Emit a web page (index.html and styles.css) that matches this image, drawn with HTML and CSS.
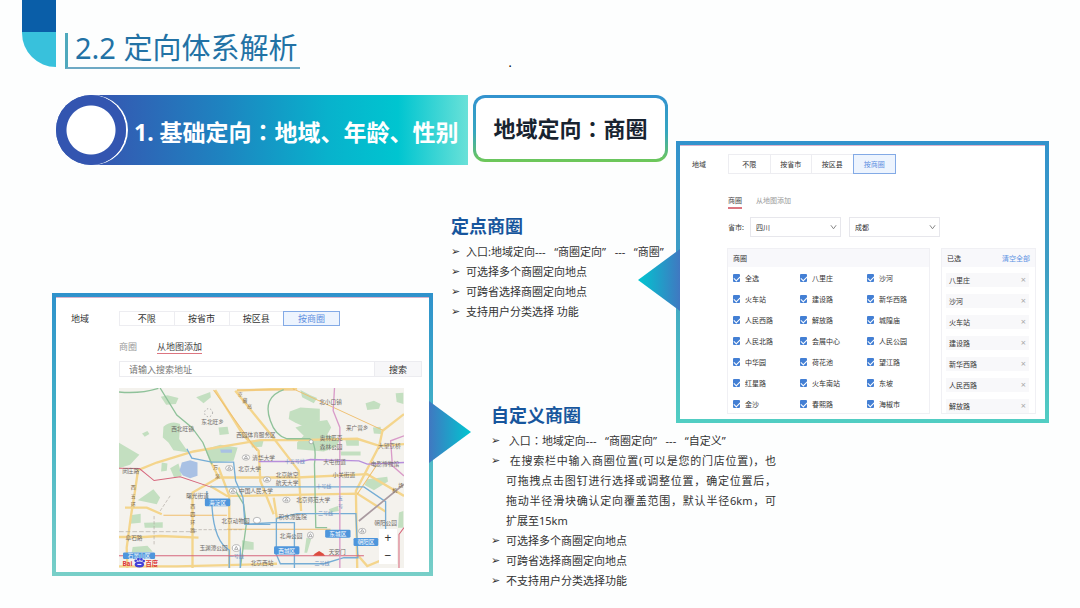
FILE: index.html
```html
<!DOCTYPE html>
<html lang="zh-CN">
<head>
<meta charset="utf-8">
<title>2.2 定向体系解析</title>
<link rel="stylesheet" href="styles.css">
</head>
<body>
<header class="header">
  <div class="ribbon"></div>
  <h1 class="title">2.2 定向体系解析</h1>
  <span class="dot">.</span>
</header>
<main class="stage">
  <div class="banner">
    <h2 class="banner-bar"><span class="ring"></span><span>1. 基础定向<span class="colon" lang="zh-TW">：</span>地域、年龄、性别</span></h2>
    <h2 class="banner-box">地域定向<span class="colon" lang="zh-TW">：</span>商圈</h2>
  </div>

  <section class="notes notes-fixed">
    <h3>定点商圈</h3>
    <ul>
      <li>入口:地域定向---&nbsp;&nbsp; “商圈定向”&nbsp;&nbsp; ---&nbsp;&nbsp; “商圈”</li>
      <li>可选择多个商圈定向地点</li>
      <li>可跨省选择商圈定向地点</li>
      <li>支持用户分类选择 功能</li>
    </ul>
  </section>

  <section class="notes notes-custom">
    <h3>自定义商圈</h3>
    <ul>
      <li>&nbsp;入口<span class="colon" lang="zh-TW">：</span>地域定向---&nbsp;&nbsp; “商圈定向”&nbsp;&nbsp; ---&nbsp;&nbsp; “自定义”</li>
      <li><span class="full">&nbsp;在搜索栏中输入商圈位置(可以是您的门店位置)，也</span><span class="full">可拖拽点击图钉进行选择或调整位置，确定位置后，</span><span class="full">拖动半径滑块确认定向覆盖范围，默认半径6km，可</span>扩展至15km</li>
      <li>可选择多个商圈定向地点</li>
      <li>可跨省选择商圈定向地点</li>
      <li>不支持用户分类选择功能</li>
    </ul>
  </section>

  <section class="panel panel-map">
    <div class="row">
      <span class="label">地域</span>
      <div class="segments">
        <button type="button">不限</button><button type="button">按省市</button><button type="button">按区县</button><button type="button" class="on">按商圈</button>
      </div>
    </div>
    <div class="body">
      <div class="tabs"><button type="button">商圈</button><button type="button" class="on">从地图添加</button></div>
      <form class="search">
        <input type="text" placeholder="请输入搜索地址" aria-label="搜索地址">
        <button type="button">搜索</button>
      </form>
      <div class="map">
        <svg viewBox="27 22 853 540" role="img" aria-label="北京地图">
          <rect x="27" y="22" width="853" height="540" fill="#f4f2ed"/>
          <g fill="#c3dfc0">
            <path d="M27 186L88 222L60 252L27 262Z"/>
            <path d="M160 138Q185 118 210 130L207 175L235 215L190 208L175 185L158 170Z"/>
            <path d="M258 50L300 34L302 50L280 68Z"/><path d="M325 140L352 138L356 160L328 163Z"/>
            <path d="M96 158L112 151L118 160L104 168Z"/><path d="M152 48L172 44L205 52L197 70L168 72Z"/>
            <path d="M285 205L330 192L382 200L370 240L300 246Z"/>
            <path d="M155 245L172 248L170 270L153 272Z"/><path d="M180 262L205 248L215 285L192 290Z"/>
            <path d="M83 358L130 325L150 350L140 370Z"/><path d="M66 402L92 398L92 425L60 428Z"/>
            <path d="M102 425L158 424L158 440L104 440Z"/><path d="M68 498L112 494L128 512L65 514Z"/>
            <path d="M395 478L430 484L430 506L395 505Z"/><path d="M420 180L460 178L455 198L425 200Z"/>
            <path d="M538 92L570 80L628 84L628 120L590 142L555 126L535 115Z"/>
            <path d="M555 140L606 124L650 118L662 140L650 162L690 176L676 198L640 212L560 205L560 185L580 165Z"/>
            <path d="M765 68L790 60L810 70L805 84L770 88Z"/><path d="M855 38L878 36L878 70L858 64Z"/>
            <path d="M770 295L830 288L832 302L790 328L762 312Z"/><path d="M705 178H745V195H708Z"/><path d="M690 212H750V224H692Z"/>
            <path d="M570 28L600 44L620 52L610 68L575 50Z"/><path d="M865 395L878 390V440L862 440Z"/><path d="M787 140L810 138L812 160L790 158Z"/>
            <path d="M588 470L602 475L590 515L582 515Z"/><path d="M655 385L682 375L685 390L660 395Z"/>
          </g>
          <g fill="#a9c1e4"><path d="M215 245L240 238L262 245L262 285L240 292L218 284L208 270Z"/><path d="M330 206H365V216H332Z"/></g>
          <g fill="none" stroke="#f4d58c" stroke-width="7">
            <path d="M52 562L50 500L62 410L75 330L84 268L140 245L250 212L330 198L450 178L560 178L740 174L806 195L880 190"/>
            <path d="M247 562V335L325 290L300 240"/><path d="M27 468H100L150 465L265 470"/>
            <path d="M325 290H560L770 280L880 345"/><path d="M300 315L350 345H400L740 338L825 392"/>
            <path d="M357 562V345L325 260"/><path d="M375 30L480 160L565 270L572 390"/>
            <path d="M315 28L400 165L445 210L450 300L490 400"/><path d="M380 30L560 22"/>
            <path d="M816 148L806 195L736 330L740 562"/>
            <path d="M816 150L880 100"/><path d="M45 380H110L155 400"/>
            <path d="M27 556H200L500 548M490 350L500 415"/><path d="M740 520L770 555L830 530"/>
          </g>
          <g fill="none" stroke="#efbf6e" stroke-width="3"><path d="M547 24L816 148M310 28L440 210M380 28H560M740 340L800 250"/><path d="M160 403H350M350 445H660"/></g>
          <g fill="none" stroke="#b0aaa2" stroke-width="2"><path d="M27 452H260" stroke-dasharray="14 6"/><path d="M250 446H400M150 390L180 345M132 405V490" stroke-dasharray="10 5"/></g>
          <g fill="none" stroke="#8fc29a" stroke-width="4">
            <path d="M27 34Q90 40 145 23"/><path d="M150 22L200 103L245 140L278 185L305 250"/><path d="M520 27Q455 50 480 120Q495 165 530 174H598Q620 190 612 250L616 440H650"/>
            <path d="M370 320L400 370L408 430L390 562"/>
          </g>
          <g fill="none" stroke="#75add5" stroke-width="4">
            <path d="M230 204L245 232L305 244H370L376 300L398 350L404 430L480 430"/><path d="M300 318H760L825 362V445"/>
            <path d="M290 330V350L305 370Q310 480 357 507V562"/><path d="M498 412L560 398H736L742 530H700L640 548H510L498 520V412M498 425H552V562M404 430L500 424"/>
            <path d="M390 500V562"/>
          </g>
          <g fill="none" stroke="#d6667c" stroke-width="3"><path d="M27 262L88 263L132 299L210 288L300 318"/><path d="M27 524H760"/><path d="M865 562V460L880 440"/></g>
          <g fill="none" stroke="#d99bc9" stroke-width="4"><path d="M672 22L668 90L688 140V562"/><path d="M845 250L840 180L880 165M840 250L880 285"/></g>
          <path d="M445 242H570L600 236L745 240L770 250L880 245" fill="none" stroke="#b78edc" stroke-width="4"/>
          <path d="M745 420L880 310" stroke="#a99aa0" stroke-width="5"/>
          <g fill="#fff" stroke="#999" stroke-width="2"><ellipse cx="407" cy="230" rx="11" ry="8"/><ellipse cx="357" cy="262" rx="11" ry="8"/><ellipse cx="470" cy="296" rx="11" ry="8"/><ellipse cx="368" cy="330" rx="11" ry="8"/><ellipse cx="528" cy="357" rx="11" ry="8"/><ellipse cx="755" cy="450" rx="11" ry="8"/><ellipse cx="600" cy="463" rx="9" ry="10"/><ellipse cx="378" cy="501" rx="12" ry="10"/><ellipse cx="440" cy="418" rx="11" ry="9"/><circle cx="602" cy="183" r="6"/></g>
          <g fill="none" stroke="#888" stroke-width="2"><path d="M402 233l5-8 5 8zM352 265l5-8 5 8zM465 299l5-8 5 8zM363 333l5-8 5 8zM523 360l5-8 5 8zM750 453l5-8 5 8zM595 467l5-9 5 9zM373 505l5-9 5 9z"/><circle cx="295" cy="96" r="12" stroke-dasharray="4 6"/></g>
          <g class="place">
            <text x="307" y="129">东北旺乡</text><text x="217" y="152">西北旺镇</text><text x="437" y="168">西园体育服务区</text>
            <text x="460" y="237">清华大学</text><text x="418" y="269">北京大学</text><text x="437" y="337">中国人民大学</text>
            <text x="660" y="69">北小口镇</text><text x="740" y="149">来广营乡</text><text x="662" y="177">奥林匹克</text><text x="662" y="204">森林公园</text>
            <text x="836" y="202">大望京桥</text><text x="672" y="250">大屯街道</text><text x="823" y="255">电影博物馆</text><text x="700" y="287">小关街道</text>
            <text x="530" y="287">北京航空</text><text x="530" y="312">航天大学</text><text x="608" y="364">北京师范大学</text><text x="262" y="350">曙光街道</text>
            <text x="376" y="425">北京动物园</text><text x="310" y="508">玉渊潭公园</text><text x="72" y="477">阜石路</text><text x="542" y="470">北海公园</text>
            <text x="547" y="414">积水潭医院</text><text x="680" y="518">天安门</text><text x="825" y="432">朝阳公园</text><text x="62" y="276">闵庄路</text><text x="455" y="553">北京西站</text>
          </g>
          <g class="road">
            <text x="70" y="325">西</text><text x="70" y="350">五</text><text x="70" y="375">环</text>
            <text x="248" y="380">西</text><text x="248" y="404">四</text><text x="248" y="428">环</text><text x="248" y="452">路</text>
            <text x="316" y="264">万</text><text x="322" y="290">泉</text>
            <text x="390" y="46">京</text><text x="404" y="64">藏</text><text x="418" y="82">高</text>
            <text x="852" y="334">机</text><text x="870" y="318">场</text>
          </g>
          <g class="line"><text x="553" y="246">十五号线</text><text x="640" y="322">十号线</text><text x="645" y="403">二号线</text><text x="635" y="553">二号线</text><text x="378" y="532">一号线</text><text x="690" y="357">五</text><text x="690" y="382">号</text></g>
          <g fill="#4e96dc"><rect x="284" y="353" width="76" height="23" rx="4"/><rect x="644" y="446" width="76" height="24" rx="4"/><rect x="729" y="471" width="74" height="24" rx="4"/><rect x="491" y="496" width="76" height="24" rx="4"/><rect x="39" y="514" width="96" height="20" rx="4"/></g>
          <g class="district"><text x="322" y="371">海淀区</text><text x="682" y="465">东城区</text><text x="766" y="490">朝阳区</text><text x="529" y="515">西城区</text><text x="87" y="530">石景山区</text></g>
          <path d="M607 524L614 517L626 510L638 517L644 524Z" fill="#dc4c3f"/>
          <g class="brand"><text x="52" y="555">Bai</text><text x="125" y="555">百度</text></g>
          <g fill="#413fd7"><ellipse cx="88" cy="550" rx="14" ry="9"/><circle cx="77" cy="539" r="4"/><circle cx="85" cy="535" r="4"/><circle cx="94" cy="535" r="4"/><circle cx="101" cy="540" r="4"/></g>
          <path d="M82 550H94" stroke="#fff" stroke-width="3"/>
        </svg>
        <div class="zoomer"><button type="button" aria-label="放大">+</button><button type="button" aria-label="缩小">−</button></div>
      </div>
    </div>
  </section>

  <section class="panel panel-list">
    <div class="row">
      <span class="label">地域</span>
      <div class="segments">
        <button type="button">不限</button><button type="button">按省市</button><button type="button">按区县</button><button type="button" class="on">按商圈</button>
      </div>
    </div>
    <div class="body">
      <div class="tabs"><button type="button" class="on">商圈</button><button type="button">从地图添加</button></div>
      <div class="region">
        <label for="province">省市:</label>
        <span class="pick"><select id="province"><option>四川</option></select><svg viewBox="0 0 8 6"><path d="M1 1L4 5L7 1"/></svg></span>
        <span class="pick"><select aria-label="城市"><option>成都</option></select><svg viewBox="0 0 8 6"><path d="M1 1L4 5L7 1"/></svg></span>
      </div>
      <div class="lists">
        <div class="list">
          <div class="list-head"><span>商圈</span></div>
          <div class="checks">
            <label><input type="checkbox" checked>全选</label><label><input type="checkbox" checked>八里庄</label><label><input type="checkbox" checked>沙河</label>
            <label><input type="checkbox" checked>火车站</label><label><input type="checkbox" checked>建设路</label><label><input type="checkbox" checked>新华西路</label>
            <label><input type="checkbox" checked>人民西路</label><label><input type="checkbox" checked>解放路</label><label><input type="checkbox" checked>城隍庙</label>
            <label><input type="checkbox" checked>人民北路</label><label><input type="checkbox" checked>会展中心</label><label><input type="checkbox" checked>人民公园</label>
            <label><input type="checkbox" checked>中华园</label><label><input type="checkbox" checked>荷花池</label><label><input type="checkbox" checked>望江路</label>
            <label><input type="checkbox" checked>红星路</label><label><input type="checkbox" checked>火车南站</label><label><input type="checkbox" checked>东坡</label>
            <label><input type="checkbox" checked>金沙</label><label><input type="checkbox" checked>春熙路</label><label><input type="checkbox" checked>海椒市</label>
          </div>
        </div>
        <div class="list">
          <div class="list-head"><span>已选</span><a href="#">清空全部</a></div>
          <ul class="chosen">
            <li>八里庄<button type="button" aria-label="移除八里庄">×</button></li>
            <li>沙河<button type="button" aria-label="移除沙河">×</button></li>
            <li>火车站<button type="button" aria-label="移除火车站">×</button></li>
            <li>建设路<button type="button" aria-label="移除建设路">×</button></li>
            <li>新华西路<button type="button" aria-label="移除新华西路">×</button></li>
            <li>人民西路<button type="button" aria-label="移除人民西路">×</button></li>
            <li>解放路<button type="button" aria-label="移除解放路">×</button></li>
          </ul>
        </div>
      </div>
    </div>
  </section>
</main>
</body>
</html>
```

FILE: styles.css
```css
* { box-sizing: border-box; }
body { margin: 0; background: #fdfefe; color: #333; font-family: "Noto Sans", "Noto Sans CJK SC", sans-serif; }
h1, h2, h3, ul { margin: 0; padding: 0; }
ul { list-style: none; }
button, input, select { margin: 0; padding: 0; font: inherit; color: inherit; border: 0; background: none; }
.colon { font-family: "Noto Sans CJK TC", sans-serif; line-height: 1; }

.header { display: flex; align-items: flex-end; padding-left: 22px; }
.ribbon { width: 34px; height: 67px; margin-bottom: 2px; border-bottom-left-radius: 34px; background: linear-gradient(#0a5ea8 32px, #38c1dc 32px); }
.title { height: 36px; margin-left: 9px; padding: 0 2px 0 7px; font-size: 29px; font-weight: 400; line-height: 30px; color: #2272a5; border-left: 3px solid #4fa9bd; border-bottom: 2px solid #6da9c4; }
.dot { margin-left: 209px; font-size: 12px; line-height: 12px; color: #000; }

.stage { display: grid; grid-template-columns: 381fr 243fr 373fr; grid-template-rows: 70px 128px 111px auto; margin-top: 26px; padding: 0 31px 16px 52px; }

.banner { grid-area: 1 / 1 / 2 / 3; display: flex; align-items: flex-start; gap: 5px; padding: 0 8px 0 4px; }
.banner-bar { flex: 1; display: flex; align-items: center; gap: 8px; height: 70px; border-radius: 35px 0 0 35px; background: linear-gradient(90deg, #3459b2 12%, #1e83c0 40%, #08b2cc 66%, #00c5d0 83%, #69e1d8); color: #fff; font-size: 23px; white-space: nowrap; padding-top: 2px; }
.ring { flex: none; width: 70px; height: 70px; margin-top: -2px; border-radius: 50%; background: radial-gradient(circle at 35px 35px, #fff 24px, #3355b0 25px); box-shadow: 2px 0 #fff; }
.banner-box { width: 195px; height: 67px; text-align: center; font-size: 22px; line-height: 61px; color: #182330; border: 3px solid transparent; border-radius: 12px; background: linear-gradient(#fff, #fff) padding-box, linear-gradient(#3292cf, #35a6c0 55%, #6fc857) border-box; }

.notes { font-size: 11px; line-height: 20px; white-space: nowrap; }
.notes h3 { font-size: 18px; line-height: 26px; color: #17569d; }
.notes li { position: relative; padding-left: 15px; }
.notes li::before { content: "➢"; position: absolute; left: 0; font-family: "DejaVu Sans", sans-serif; font-size: 11px; }
.notes-fixed { grid-area: 2 / 2 / 4 / 3; padding: 48px 0 0 18px; }
.notes-fixed h3 { margin-bottom: 3px; }
.notes-custom { grid-area: 4 / 2 / 5 / 4; width: 343px; padding: 0 0 0 58px; }
.notes-custom h3 { line-height: 22px; margin-bottom: 5px; }
.full { display: block; text-align-last: justify; }

.panel { position: relative; align-self: start; border: 4px solid transparent; }
.panel::after { content: ""; position: absolute; width: 42px; height: 62px; top: 104px; }
.panel-map { grid-area: 3 / 1 / 5 / 2; padding: 14px 7px 4px 15px; font-size: 9px; background: linear-gradient(#fff, #fff) padding-box, linear-gradient(#2f92cc, #42b2c6 45%, #78cfc8) border-box; box-shadow: inset 0 1px #d9b3cb; }
.panel-map::after { left: 100%; background: linear-gradient(90deg, #4078c1, #00c6d0); clip-path: polygon(0 0, 100% 50%, 0 100%); }
.panel-list { grid-area: 1 / 3 / 5 / 4; margin-top: 46px; padding: 9px 9px 5px 12px; font-size: 7px; background: linear-gradient(#fff, #fff) padding-box, linear-gradient(#3292cc, #3e9ec4 45%, #52cec3) border-box; box-shadow: inset 0 1px #d9b3cb; }
.panel-list::after { right: 100%; background: linear-gradient(270deg, #4078c1, #00c6d0); clip-path: polygon(100% 0, 0 50%, 100% 100%); }

.row { display: flex; align-items: center; }
.label { flex: none; width: 48px; }
.panel-list .label { width: 36px; }
.segments { display: grid; grid-template-columns: repeat(4, 1fr); width: 221px; height: 15px; border: 1px solid #ededf1; }
.panel-list .segments { width: 168px; height: 20px; }
.segments button { border-right: 1px solid #ededf1; line-height: 13px; }
.segments .on { margin: -1px; color: #5d8fe0; background: #edf4fe; border: 1px solid #83aae6; }
.body { margin-left: 48px; }
.panel-list .body { margin-left: 35px; }
.tabs { display: flex; align-items: flex-start; color: #999; line-height: 12px; }
.tabs .on { color: #444; border-bottom: 1px solid #dc7580; }
.panel-map .tabs { gap: 20px; margin-top: 15px; }
.panel-list .tabs { gap: 14px; margin: 21px 0 0 1px; }
.panel-list .tabs .on { border-bottom-width: 2px; }

.search { display: flex; height: 16px; margin-top: 7px; border: 1px solid #ececf0; }
.search input { flex: 1; min-width: 0; padding-left: 9px; }
.search input::placeholder { color: #777; opacity: 1; }
.search button { width: 47px; background: #f7f7f9; border-left: 1px solid #ececf0; }
.map { position: relative; margin: 11px 18px 0 0; }
.map svg { display: block; width: 100%; }
.map text { text-anchor: middle; font-size: 17px; fill: #6e6a67; }
.map .road text { font-size: 15px; fill: #7b684a; }
.map .line text { font-size: 15px; fill: #6d8fc0; }
.map .district text { font-size: 17px; fill: #fff; }
.map .brand text { font-size: 19px; font-weight: 700; fill: #dd3838; }
.zoomer { position: absolute; right: 7px; bottom: 4px; display: grid; width: 18px; height: 35px; background: #fff; }
.zoomer button { font-size: 12px; line-height: 16px; }

.region { display: flex; align-items: center; gap: 8px; margin: 8px 0 11px 1px; }
.region label { width: 14px; white-space: nowrap; }
.pick { position: relative; width: 91px; }
.pick select { width: 100%; height: 20px; padding-left: 5px; appearance: none; border: 1px solid #e7e7ec; }
.pick svg { position: absolute; right: 4px; top: 7px; width: 7px; height: 6px; fill: none; stroke: #777; }
.lists { display: grid; grid-template-columns: 203fr 95fr; gap: 11px; }
.list { border: 1px solid #f0f0f4; }
.list-head { display: flex; justify-content: space-between; align-items: center; height: 18px; padding: 0 5px; background: #f8f8fb; }
.list-head a { color: #5d93e3; text-decoration: none; }
.checks { display: grid; grid-template-columns: repeat(3, 1fr); grid-auto-rows: 21px; height: 145px; }
.checks label { display: flex; align-items: center; gap: 5px; padding-left: 5px; white-space: nowrap; }
.checks input { position: relative; width: 7px; height: 8px; appearance: none; border-radius: 1px; background: #437fd4; }
.checks input:checked::after { content: ""; position: absolute; left: 2px; top: 1px; width: 3px; height: 5px; border: solid #fff; border-width: 0 1px 1px 0; transform: rotate(45deg); }
.chosen { display: grid; grid-auto-rows: 14px; gap: 7px; padding: 6px 6px 0 4px; }
.chosen li { display: flex; justify-content: space-between; align-items: center; padding: 0 3px; background: #f8f8fa; }
.chosen button { color: #aaa; font-size: 9px; line-height: 10px; }
```
